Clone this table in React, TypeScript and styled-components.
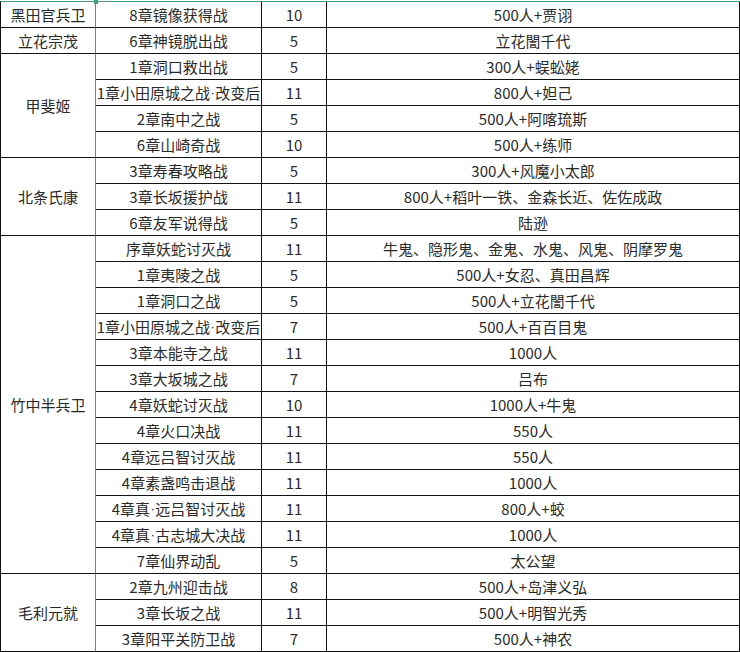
import React from "react";
import styled, { createGlobalStyle } from "styled-components";

const Global = createGlobalStyle`
  html, body { margin: 0; padding: 0; background: #ffffff; }
  body { font-family: "Noto Sans CJK SC", "Noto Sans", sans-serif; }
`;

const Sheet = styled.div`
  position: relative;
  margin-top: 1px;
  width: 740px;
  box-sizing: border-box;
  display: grid;
  grid-template-columns: 95px 166px 65px 413px;
  grid-auto-rows: 26px;
  border-left: 1px solid #111;
  border-top: 1px solid #3f9f7c;
`;

const Cell = styled.div<{ $span?: number; $col: number }>`
  box-sizing: border-box;
  grid-column: ${(p) => p.$col};
  grid-row: ${(p) => (p.$span ? `span ${p.$span}` : "auto")};
  display: flex;
  align-items: center;
  justify-content: center;
  border-right: 1px solid ${(p) => (p.$col === 1 ? "#3f9f7c" : "#111")};
  border-bottom: 1px solid #111;
  font-size: 15px;
  line-height: 1;
  color: #2a2a2a;
  white-space: nowrap;
  overflow: hidden;
  padding-bottom: 1px;
`;

const Dot = styled.span`
  font-family: "Liberation Sans", sans-serif;
  font-size: 13px;
  margin: 0 0.5px;
`;

const Handle = styled.div`
  position: absolute;
  left: 93px;
  top: -2px;
  width: 4px;
  height: 4px;
  background: #3f9f7c;
`;

type Row = [string, string, string];
type Group = { name: string; rows: Row[] };

const groups: Group[] = [
  { name: "黑田官兵卫", rows: [["8章镜像获得战", "10", "500人+贾诩"]] },
  { name: "立花宗茂", rows: [["6章神镜脱出战", "5", "立花誾千代"]] },
  {
    name: "甲斐姬",
    rows: [
      ["1章洞口救出战", "5", "300人+蜈蚣姥"],
      ["1章小田原城之战·改变后", "11", "800人+妲己"],
      ["2章南中之战", "5", "500人+阿喀琉斯"],
      ["6章山崎奇战", "10", "500人+练师"],
    ],
  },
  {
    name: "北条氏康",
    rows: [
      ["3章寿春攻略战", "5", "300人+风魔小太郎"],
      ["3章长坂援护战", "11", "800人+稻叶一铁、金森长近、佐佐成政"],
      ["6章友军说得战", "5", "陆逊"],
    ],
  },
  {
    name: "竹中半兵卫",
    rows: [
      ["序章妖蛇讨灭战", "11", "牛鬼、隐形鬼、金鬼、水鬼、风鬼、阴摩罗鬼"],
      ["1章夷陵之战", "5", "500人+女忍、真田昌辉"],
      ["1章洞口之战", "5", "500人+立花誾千代"],
      ["1章小田原城之战·改变后", "7", "500人+百百目鬼"],
      ["3章本能寺之战", "11", "1000人"],
      ["3章大坂城之战", "7", "吕布"],
      ["4章妖蛇讨灭战", "10", "1000人+牛鬼"],
      ["4章火口决战", "11", "550人"],
      ["4章远吕智讨灭战", "11", "550人"],
      ["4章素盏鸣击退战", "11", "1000人"],
      ["4章真·远吕智讨灭战", "11", "800人+蛟"],
      ["4章真·古志城大决战", "11", "1000人"],
      ["7章仙界动乱", "5", "太公望"],
    ],
  },
  {
    name: "毛利元就",
    rows: [
      ["2章九州迎击战", "8", "500人+岛津义弘"],
      ["3章长坂之战", "11", "500人+明智光秀"],
      ["3章阳平关防卫战", "7", "500人+神农"],
    ],
  },
];

function Text({ value }: { value: string }) {
  const parts = value.split("·");
  return (
    <>
      {parts.map((p, i) => (
        <React.Fragment key={i}>
          {i > 0 && <Dot>·</Dot>}
          {p}
        </React.Fragment>
      ))}
    </>
  );
}

export default function App() {
  return (
    <>
      <Global />
      <Sheet>
        <Handle />
        {groups.map((g) => (
          <React.Fragment key={g.name}>
            <Cell $col={1} $span={g.rows.length}>
              {g.name}
            </Cell>
            {g.rows.map((r, i) => (
              <React.Fragment key={i}>
                <Cell $col={2}>
                  <Text value={r[0]} />
                </Cell>
                <Cell $col={3}>{r[1]}</Cell>
                <Cell $col={4}>{r[2]}</Cell>
              </React.Fragment>
            ))}
          </React.Fragment>
        ))}
      </Sheet>
    </>
  );
}
